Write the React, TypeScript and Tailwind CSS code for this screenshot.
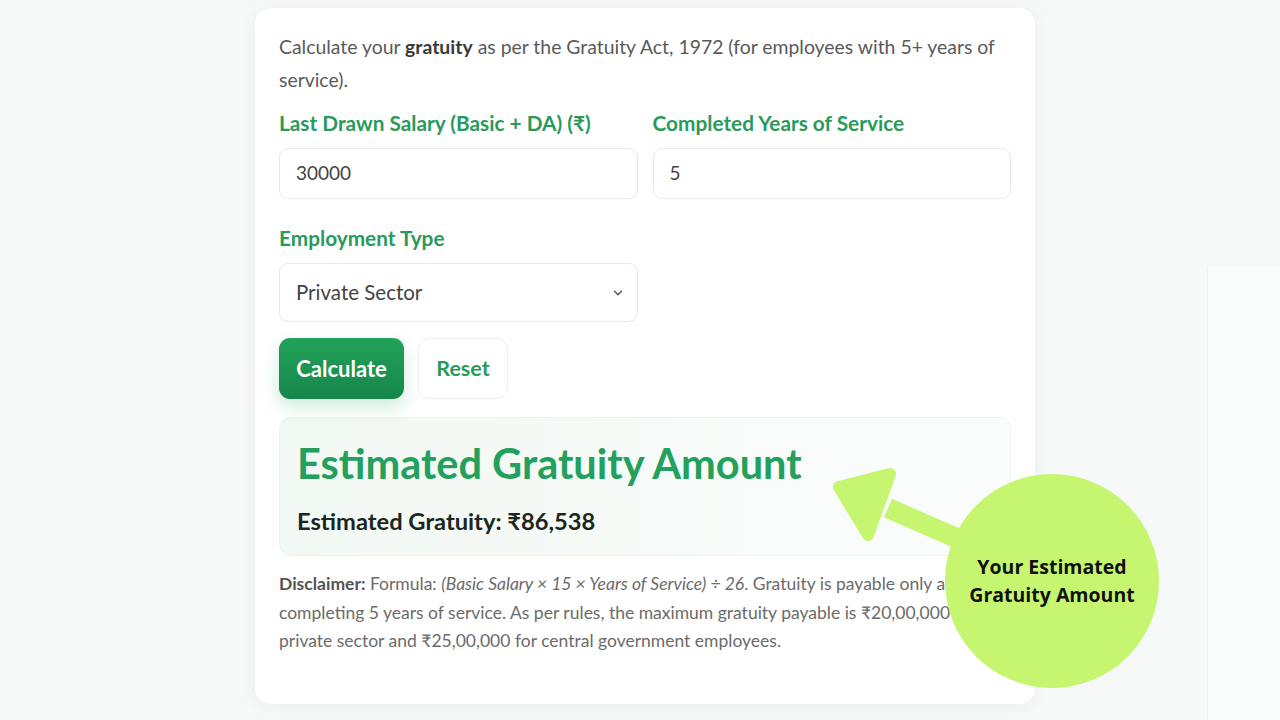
import { ChevronDown } from 'lucide-react';

const font = { fontFamily: 'Lato, "Noto Sans", sans-serif' };

function Field({ label, children }: { label: string; children: React.ReactNode }) {
  return (
    <div className="flex flex-col">
      <label className="text-[20.8px] font-bold text-[#2a9a5b] leading-[26px] mb-[12px]">{label}</label>
      {children}
    </div>
  );
}

function Callout() {
  return (
    <div className="absolute left-[830px] top-[466px] w-[335px] h-[228px] pointer-events-none">
      <svg width="335" height="228" viewBox="0 0 335 228" className="absolute inset-0">
        <line x1="58" y1="42" x2="140" y2="78" stroke="#c6f56f" strokeWidth="20" />
        <polygon
          points="9,21 60,8 38,69"
          fill="#c6f56f"
          stroke="#c6f56f"
          strokeWidth="12"
          strokeLinejoin="round"
        />
      </svg>
      <div className="absolute left-[115px] top-[8px] w-[214px] h-[214px] rounded-full bg-[#c6f56f] flex items-center justify-center">
        <p
          className="text-[19.5px] font-bold text-[#111] leading-[28px] text-center"
          style={{ fontFamily: '"Open Sans", sans-serif' }}
        >
          Your Estimated
          <br />
          Gratuity Amount
        </p>
      </div>
    </div>
  );
}

export default function App() {
  return (
    <div className="relative w-[1280px] h-[720px] overflow-hidden bg-[#f7f9f8]" style={font}>
      <div className="flex h-full">
        <div className="w-[255px] shrink-0" />
        <div className="w-[780px] shrink-0 mt-[8px] h-[696px] bg-white rounded-[16px] shadow-[0_2px_18px_rgba(0,0,0,0.05)] px-[24px] pt-[22px]">
          <p className="text-[19.4px] leading-[33px] text-[#5a5a5a]">
            Calculate your <b className="text-[#3a3a3a]">gratuity</b> as per the Gratuity Act, 1972 (for employees with 5+ years of service).
          </p>

          <div className="grid grid-cols-2 gap-x-[15px] mt-[14px]">
            <Field label="Last Drawn Salary (Basic + DA) (₹)">
              <div className="h-[51px] rounded-[9px] border border-[#e6e9e8] flex items-center px-[16px] text-[19px] text-[#444]">
                30000
              </div>
            </Field>
            <Field label="Completed Years of Service">
              <div className="h-[51px] rounded-[9px] border border-[#e6e9e8] flex items-center px-[16px] text-[19px] text-[#444]">
                5
              </div>
            </Field>
          </div>

          <div className="grid grid-cols-2 gap-x-[15px] mt-[26px]">
            <Field label="Employment Type">
              <div className="h-[59px] rounded-[9px] border border-[#e6e9e8] flex items-center justify-between px-[16px] text-[20.5px] text-[#444]">
                <span>Private Sector</span>
                <ChevronDown size={14} strokeWidth={2.5} className="text-[#555] mr-[-4px]" />
              </div>
            </Field>
          </div>

          <div className="flex gap-[14px] mt-[16px]">
            <button className="h-[61px] w-[125px] rounded-[11px] bg-gradient-to-b from-[#22a25a] to-[#16864a] text-white text-[22px] font-bold shadow-[0_8px_18px_rgba(34,162,90,0.22)]">
              Calculate
            </button>
            <button className="h-[61px] w-[90px] rounded-[11px] bg-white border border-[#eef0ef] text-[#2a9a5b] text-[21.5px] font-bold">
              Reset
            </button>
          </div>

          <div className="mt-[18px] h-[139px] rounded-[12px] border border-[#eef3f0] bg-gradient-to-r from-[#f2f8f4] to-[#fbfdfc] px-[17px] pt-[20px]">
            <h2 className="text-[41.5px] leading-[50px] font-bold text-[#23a05c]">Estimated Gratuity Amount</h2>
            <p className="text-[23.7px] leading-[30px] font-bold text-[#1c2620] mt-[18px]">Estimated Gratuity: ₹86,538</p>
          </div>

          <p className="mt-[14px] text-[17.5px] leading-[28.5px] text-[#6b6b6b]">
            <b className="text-[#555]">Disclaimer:</b> Formula: <i>(Basic Salary × 15 × Years of Service) ÷ 26</i>. Gratuity is payable only after completing 5 years of service. As per rules, the maximum gratuity payable is ₹20,00,000 for the private sector and ₹25,00,000 for central government employees.
          </p>
        </div>
        <div className="w-[172px] shrink-0" />
        <div className="flex-1 mt-[267px] bg-[#fbfcfc] border-l border-[#f0f2f1]" />
      </div>
      <Callout />
    </div>
  );
}
